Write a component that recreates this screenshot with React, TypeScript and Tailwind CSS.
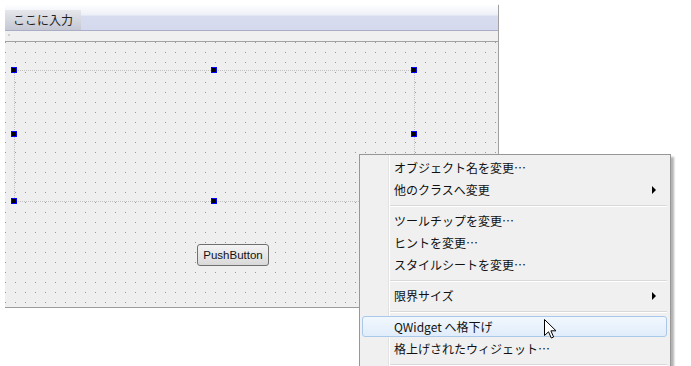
import React from "react";

const jp = "font-['Noto_Sans_CJK_JP',sans-serif]";

function Handle({ x, y }: { x: number; y: number }) {
  return (
    <div
      className="absolute w-[6px] h-[6px] border border-[#0000ff] bg-black"
      style={{ left: x, top: y }}
    />
  );
}

function Arrow() {
  return (
    <svg width="5" height="8" viewBox="0 0 5 8" className="absolute right-[13px] top-[7px]">
      <path d="M0 0 L4 4 L0 8 Z" fill="#000" />
    </svg>
  );
}

function Item({ label, sub, active }: { label: string; sub?: boolean; active?: boolean }) {
  return (
    <div className="relative h-[22px]">
      {active && (
        <div className="absolute left-[2px] right-[3px] top-0 h-[21px] rounded-[3px] border border-[#aac8ea] bg-gradient-to-b from-[#f1f7fe] to-[#e1edfb]" />
      )}
      <div className="relative pl-[34px] text-[12px] leading-[22px] text-[#111]">{label}</div>
      {sub && <Arrow />}
    </div>
  );
}

function Sep() {
  return (
    <div className="h-[9px] pt-[4px] pl-[28px] pr-[3px]">
      <div className="h-px bg-[#d9d9d9]" />
      <div className="h-px bg-white" />
    </div>
  );
}

function Cursor() {
  return (
    <svg width="13" height="20" viewBox="0 0 13 20" className="absolute left-[544px] top-[319px]">
      <path
        d="M0.5 0.5 L0.5 16.5 L4.5 12.8 L7.3 19 L9.6 18 L6.9 11.8 L12 11.8 Z"
        fill="#fff"
        stroke="#000"
        strokeWidth="1"
        strokeLinejoin="round"
      />
    </svg>
  );
}

export default function App() {
  return (
    <div className={`relative w-[691px] h-[366px] overflow-hidden bg-white ${jp}`}>
      <div className="ml-[5px] w-[494px]">
        <div className="flex items-end h-[30px] border-r border-[#a0a0a0] [border-image:linear-gradient(to_bottom,transparent_5px,#a0a0a0_6px)_1] bg-[linear-gradient(to_bottom,#ffffff_0px,#ffffff_4px,#eef0f8_15px,#d8dcef_16px,#d4d9ed_30px)]">
          <div className="h-[20px] px-[8px] text-[12px] leading-[20px] text-[#222] bg-gradient-to-b from-[#e6e7ec] to-[#c5c8d3]">
            ここに入力
          </div>
        </div>
        <div className="border-r border-[#a0a0a0]">
          <div className="h-px bg-[#a9adc6]" />
          <div className="relative h-[10px] bg-[#f0f0f0]">
            <div className="absolute left-[3px] top-[3px] w-[2px] h-[2px] bg-[#cfcfcf]" />
          </div>
          <div className="h-px bg-[#a3a3a3]" />
          <div className="relative h-[266px] bg-[#efefef] border-b border-[#9c9c9c]">
            <svg className="absolute inset-0" width="100%" height="100%">
              <defs>
                <pattern id="grid" width="10" height="10" patternUnits="userSpaceOnUse">
                  <rect width="1" height="1" fill="#9a9a9a" />
                </pattern>
              </defs>
              <rect width="100%" height="100%" fill="url(#grid)" />
            </svg>
            <div className="absolute left-[9px] top-[28px] w-[401px] h-[132px] border border-dotted border-[#c2c2c2]" />
            <Handle x={6} y={25} />
            <Handle x={206} y={25} />
            <Handle x={406} y={25} />
            <Handle x={6} y={89} />
            <Handle x={406} y={89} />
            <Handle x={6} y={156} />
            <Handle x={206} y={156} />
            <Handle x={406} y={156} />
            <button className="absolute left-[192px] top-[202px] w-[72px] h-[22px] rounded-[3px] border border-[#707070] bg-gradient-to-b from-[#f4f4f4] to-[#d9d9d9] font-['Liberation_Sans',sans-serif] text-[11.5px] leading-[20px] text-[#111]">
              PushButton
            </button>
          </div>
        </div>
      </div>

      <div className="absolute left-[359px] top-[154px] w-[312px] h-[230px] border border-[#979797] bg-[#f0f0f0] shadow-[3px_3px_2px_rgba(0,0,0,0.3)] pt-[2px]">
        <div className="absolute left-[28px] top-0 bottom-0 w-px bg-[#e2e2e2]" />
        <div className="absolute left-[29px] top-0 bottom-0 w-px bg-white" />
        <Item label="オブジェクト名を変更…" />
        <Item label="他のクラスへ変更" sub />
        <Sep />
        <Item label="ツールチップを変更…" />
        <Item label="ヒントを変更…" />
        <Item label="スタイルシートを変更…" />
        <Sep />
        <Item label="限界サイズ" sub />
        <Sep />
        <Item label="QWidget へ格下げ" active />
        <Item label="格上げされたウィジェット…" />
        <Sep />
      </div>
      <Cursor />
    </div>
  );
}
